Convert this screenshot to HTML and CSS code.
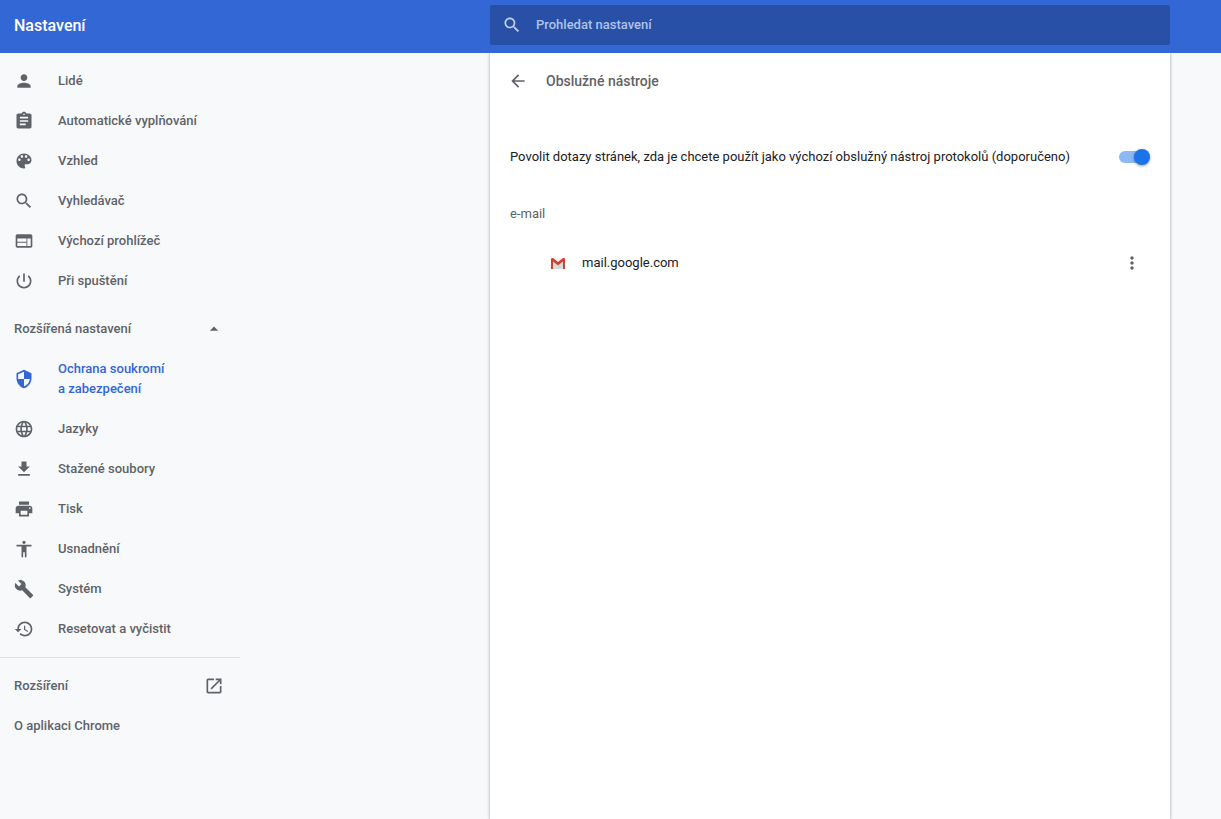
FILE: index.html
```html
<!DOCTYPE html>
<html lang="cs">
<head>
<meta charset="utf-8">
<meta name="viewport" content="width=device-width, initial-scale=1">
<title>Nastavení</title>
<link rel="stylesheet" href="styles.css">
</head>
<body>
<header class="toolbar columns">
  <h1 class="toolbar-title">Nastavení</h1>
  <label class="search">
    <svg class="icon" viewBox="0 0 24 24" aria-hidden="true"><path d="M15.5 14h-.79l-.28-.27C15.41 12.59 16 11.11 16 9.5 16 5.91 13.09 3 9.5 3S3 5.91 3 9.5 5.91 16 9.5 16c1.61 0 3.09-.59 4.23-1.57l.27.28v.79l5 4.99L20.49 19l-4.99-5zm-6 0C7.01 14 5 11.99 5 9.5S7.01 5 9.5 5 14 7.01 14 9.5 11.99 14 9.5 14z"/></svg>
    <input class="search-input" type="search" placeholder="Prohledat nastavení" aria-label="Prohledat nastavení">
  </label>
</header>
<div class="content columns">
  <nav class="menu">
    <a class="menu-item" href="#people"><svg class="icon" viewBox="0 0 24 24"><path d="M12 12c2.21 0 4-1.79 4-4s-1.79-4-4-4-4 1.790-4 4 1.790 4 4 4zm0 2c-2.670 0-8 1.340-8 4v2h16v-2c0-2.660-5.330-4-8-4z"/></svg><span>Lidé</span></a>
    <a class="menu-item" href="#autofill"><svg class="icon" viewBox="0 0 24 24"><path d="M19 3h-4.180C14.400 1.840 13.300 1 12 1s-2.400.84-2.820 2H5c-1.100 0-2 .9-2 2v14c0 1.100.9 2 2 2h14c1.100 0 2-.9 2-2V5c0-1.100-.9-2-2-2zm-7 0c.55 0 1 .45 1 1s-.45 1-1 1-1-.45-1-1 .45-1 1-1zm2 14H7v-2h7v2zm3-4H7v-2h10v2zm0-4H7V7h10v2z"/></svg><span>Automatické vyplňování</span></a>
    <a class="menu-item" href="#appearance"><svg class="icon" viewBox="0 0 24 24"><path d="M12 3c-4.970 0-9 4.030-9 9s4.030 9 9 9c.83 0 1.500-.67 1.500-1.500 0-.39-.15-.74-.39-1.010-.23-.26-.38-.61-.38-.99 0-.83.67-1.500 1.500-1.500H16c2.760 0 5-2.240 5-5 0-4.420-4.030-8-9-8zm-5.500 9c-.83 0-1.500-.67-1.500-1.500S5.670 9 6.500 9 8 9.670 8 10.500 7.330 12 6.500 12zm3-4C8.670 8 8 7.330 8 6.500S8.670 5 9.500 5s1.500.67 1.500 1.500S10.330 8 9.500 8zm5 0c-.83 0-1.500-.67-1.500-1.500S13.670 5 14.500 5s1.500.67 1.500 1.500S15.330 8 14.500 8zm3 4c-.83 0-1.500-.67-1.500-1.500S16.670 9 17.500 9s1.500.67 1.500 1.500-.67 1.500-1.500 1.500z"/></svg><span>Vzhled</span></a>
    <a class="menu-item" href="#search"><svg class="icon" viewBox="0 0 24 24"><path d="M15.5 14h-.79l-.28-.27C15.41 12.59 16 11.11 16 9.5 16 5.91 13.09 3 9.5 3S3 5.910 3 9.500 5.910 16 9.500 16c1.610 0 3.090-.59 4.230-1.570l.27.28v.79l5 4.990L20.490 19l-4.990-5zm-6 0C7.010 14 5 11.990 5 9.500S7.010 5 9.500 5 14 7.010 14 9.500 11.990 14 9.500 14z"/></svg><span>Vyhledávač</span></a>
    <a class="menu-item" href="#default-browser"><svg class="icon" viewBox="0 0 24 24"><path d="M20 4H4c-1.100 0-1.990.9-1.990 2L2 18c0 1.100.9 2 2 2h16c1.100 0 2-.9 2-2V6c0-1.100-.9-2-2-2zm-5 14H4v-4h11v4zm0-5H4V9h11v4zm5 5h-4V9h4v9z"/></svg><span>Výchozí prohlížeč</span></a>
    <a class="menu-item" href="#on-startup"><svg class="icon" viewBox="0 0 24 24"><path d="M13 3h-2v10h2V3zm4.830 2.170l-1.420 1.420C17.990 7.860 19 9.810 19 12c0 3.870-3.130 7-7 7s-7-3.130-7-7c0-2.190 1.010-4.140 2.580-5.420L6.170 5.170C4.230 6.820 3 9.260 3 12c0 4.970 4.030 9 9 9s9-4.030 9-9c0-2.740-1.230-5.180-3.170-6.830z"/></svg><span>Při spuštění</span></a>

    <button class="menu-item menu-toggle" type="button" aria-expanded="true"><span>Rozšířená nastavení</span><svg class="icon" viewBox="0 0 24 24"><path d="M7 14l5-5 5 5z"/></svg></button>

    <a class="menu-item selected" href="#privacy" aria-current="page"><svg class="icon" viewBox="0 0 24 24"><path d="M12 1L3 5v6c0 5.550 3.840 10.740 9 12 5.160-1.260 9-6.450 9-12V5l-9-4zm0 10.990h7c-.53 4.120-3.280 7.790-7 8.940V12H5V6.300l7-3.110v8.800z"/></svg><span>Ochrana soukromí<br>a zabezpečení</span></a>
    <a class="menu-item" href="#languages"><svg class="icon" viewBox="0 0 24 24"><path d="M11.990 2C6.470 2 2 6.480 2 12s4.470 10 9.990 10C17.520 22 22 17.520 22 12S17.520 2 11.990 2zm6.930 6h-2.950c-.32-1.250-.78-2.450-1.380-3.560 1.840.63 3.370 1.910 4.330 3.560zM12 4.040c.83 1.200 1.480 2.530 1.910 3.960h-3.820c.43-1.430 1.080-2.760 1.910-3.960zM4.260 14C4.100 13.360 4 12.690 4 12s.1-1.360.26-2h3.380c-.08.66-.14 1.320-.14 2s.06 1.340.14 2H4.260zm.82 2h2.950c.32 1.250.78 2.450 1.380 3.560-1.840-.63-3.370-1.900-4.330-3.560zm2.950-8H5.080c.96-1.660 2.490-2.930 4.330-3.560C8.810 5.550 8.350 6.750 8.030 8zM12 19.960c-.83-1.200-1.480-2.530-1.910-3.960h3.820c-.43 1.430-1.080 2.760-1.910 3.960zM14.340 14H9.660c-.09-.66-.16-1.320-.16-2s.07-1.350.16-2h4.680c.09.65.16 1.320.16 2s-.07 1.340-.16 2zm.25 5.560c.6-1.110 1.060-2.310 1.380-3.560h2.950c-.96 1.650-2.490 2.930-4.330 3.560zM16.360 14c.08-.66.14-1.320.14-2s-.06-1.340-.14-2h3.380c.16.64.26 1.310.26 2s-.1 1.360-.26 2h-3.380z"/></svg><span>Jazyky</span></a>
    <a class="menu-item" href="#downloads"><svg class="icon" viewBox="0 0 24 24"><path d="M19 9h-4V3H9v6H5l7 7 7-7zM5 18v2h14v-2H5z"/></svg><span>Stažené soubory</span></a>
    <a class="menu-item" href="#printing"><svg class="icon" viewBox="0 0 24 24"><path d="M19 8H5c-1.660 0-3 1.340-3 3v6h4v4h12v-4h4v-6c0-1.660-1.340-3-3-3zm-3 11H8v-5h8v5zm3-7c-.55 0-1-.45-1-1s.45-1 1-1 1 .45 1 1-.45 1-1 1zm-1-9H6v4h12V3z"/></svg><span>Tisk</span></a>
    <a class="menu-item" href="#accessibility"><svg class="icon" viewBox="0 0 24 24"><path d="M12 2c1.100 0 2 .9 2 2s-.9 2-2 2-2-.9-2-2 .9-2 2-2zm9 7h-6v13h-2v-6h-2v6H9V9H3V7h18v2z"/></svg><span>Usnadnění</span></a>
    <a class="menu-item" href="#system"><svg class="icon" viewBox="0 0 24 24"><path d="M22.700 19l-9.100-9.100c.9-2.300.4-5-1.500-6.900-2-2-5-2.400-7.400-1.300L9 6 6 9 1.600 4.700C.4 7.100.9 10.100 2.900 12.100c1.900 1.900 4.600 2.400 6.900 1.500l9.100 9.100c.4.4 1 .4 1.400 0l2.300-2.300c.5-.4.5-1.100.1-1.400z"/></svg><span>Systém</span></a>
    <a class="menu-item" href="#reset"><svg class="icon" viewBox="0 0 24 24"><path d="M13 3c-4.970 0-9 4.030-9 9H1l3.890 3.890.07.14L9 12H6c0-3.870 3.130-7 7-7s7 3.130 7 7-3.130 7-7 7c-1.930 0-3.680-.79-4.940-2.060l-1.420 1.420C8.270 19.990 10.510 21 13 21c4.970 0 9-4.030 9-9s-4.030-9-9-9zm-1 5v5l4.280 2.540.72-1.210-3.500-2.080V8H12z"/></svg><span>Resetovat a vyčistit</span></a>

    <hr class="menu-divider">

    <a class="menu-item menu-link" href="#extensions"><span>Rozšíření</span><svg class="icon" viewBox="0 0 24 24"><path d="M19 19H5V5h7V3H5c-1.110 0-2 .9-2 2v14c0 1.100.89 2 2 2h14c1.100 0 2-.9 2-2v-7h-2v7zM14 3v2h3.590l-9.830 9.830 1.410 1.410L19 6.410V10h2V3h-7z"/></svg></a>
    <a class="menu-item menu-link" href="#about"><span>O aplikaci Chrome</span></a>
  </nav>

  <main class="page">
    <div class="page-header">
      <button class="icon-button" type="button" aria-label="Zpět"><svg class="icon" viewBox="0 0 24 24"><path d="M20 11H7.830l5.590-5.590L12 4l-8 8 8 8 1.410-1.410L7.830 13H20v-2z"/></svg></button>
      <h2 class="page-title">Obslužné nástroje</h2>
    </div>
    <div class="setting-row">
      <label for="handlers">Povolit dotazy stránek, zda je chcete použít jako výchozí obslužný nástroj protokolů (doporučeno)</label>
      <input class="switch" id="handlers" type="checkbox" role="switch" checked>
    </div>
    <h3 class="protocol">e-mail</h3>
    <div class="handler-row">
      <svg class="favicon" viewBox="0 0 16 16" aria-hidden="true"><path fill="#e3e3e3" d="M2 3h12v11H2z"/><path fill="#cfcfcf" d="M3 7l5 4 5-4v7H3z" opacity=".5"/><path fill="#f3f3f3" d="M3 3h10L8 7z"/><path fill="#c9453a" d="M1 4q0-1 1-1h1l5 4 5-4h1q1 0 1 1v10h-2V6.500L8 10.500 3 6.500V14H1z"/></svg>
      <span class="handler-host">mail.google.com</span>
      <button class="icon-button" type="button" aria-label="Další akce"><svg class="icon" viewBox="0 0 24 24"><path d="M12 8c1.100 0 2-.9 2-2s-.9-2-2-2-2 .9-2 2 .9 2 2 2zm0 2c-1.100 0-2 .9-2 2s.9 2 2 2 2-.9 2-2-.9-2-2-2zm0 6c-1.100 0-2 .9-2 2s.9 2 2 2 2-.9 2-2-.9-2-2-2z"/></svg></button>
    </div>
  </main>
</div>
</body>
</html>
```
FILE: styles.css
```css
* {
  box-sizing: border-box;
}

body {
  display: flex;
  flex-direction: column;
  min-height: 100vh;
  margin: 0;
  background: #f8f9fa;
  color: #202124;
  font: 400 13px/20px Roboto, "Liberation Sans", sans-serif;
}

h1, h2, h3 {
  margin: 0;
}

.columns {
  display: grid;
  grid-template-columns: minmax(240px, 1fr) minmax(0, 680px) 51px;
}

.icon {
  display: block;
  flex: none;
  width: 20px;
  height: 20px;
  fill: currentColor;
}

/* Toolbar */

.toolbar {
  padding: 5px 0 8px;
  background: #3367d6;
  color: #fff;
}

.toolbar-title {
  align-self: center;
  padding: 2px 0 0 14px;
  font-size: 16px;
  font-weight: 500;
}

.search {
  display: flex;
  align-items: center;
  gap: 14px;
  height: 40px;
  padding: 0 12px;
  border-radius: 2px;
  background: #2850a7;
  color: #c2d1f2;
}

.search-input {
  flex: 1;
  min-width: 0;
  padding: 0;
  border: 0;
  outline: 0;
  background: none;
  color: #fff;
  font: inherit;
  font-weight: 500;
}

.search-input::placeholder {
  color: #b0c2ea;
  opacity: 1;
}

/* Side menu */

.content {
  flex: 1;
}

.menu {
  width: 240px;
  padding-top: 8px;
}

.menu-item {
  display: flex;
  align-items: center;
  gap: 24px;
  width: 100%;
  padding: 10px 16px 10px 14px;
  color: #5f6368;
  font-weight: 500;
  text-decoration: none;
}

.menu-item.selected {
  color: #3367d6;
}

.menu-toggle {
  justify-content: space-between;
  margin-top: 8px;
  border: 0;
  background: none;
  font: inherit;
  font-weight: 500;
}

.menu-link {
  justify-content: space-between;
}

.menu-divider {
  margin: 8px 0;
  border: 0;
  border-top: 1px solid #dfe1e5;
}

/* Page */

.page {
  background: #fff;
  box-shadow: 0 0 3px rgba(60, 64, 67, 0.5);
  clip-path: inset(0 -4px);
}

.icon-button {
  display: grid;
  place-items: center;
  flex: none;
  width: 36px;
  height: 36px;
  padding: 0;
  border: 0;
  border-radius: 50%;
  background: none;
  color: #5f6368;
}

.page-header {
  display: flex;
  align-items: center;
  gap: 10px;
  padding: 10px;
}

.page-title {
  color: #5f6368;
  font-size: 14px;
  font-weight: 500;
}

.setting-row {
  display: flex;
  align-items: center;
  justify-content: space-between;
  gap: 20px;
  min-height: 48px;
  margin-top: 24px;
  padding: 0 20px;
}

.switch {
  display: flex;
  align-items: center;
  flex: none;
  appearance: none;
  width: 28px;
  height: 12px;
  margin: 0 3px 0 0;
  border-radius: 6px;
  background: #bdc1c6;
}

.switch::before {
  content: "";
  flex: none;
  width: 16px;
  height: 16px;
  border-radius: 50%;
  background: #fff;
  box-shadow: 0 1px 3px rgba(0, 0, 0, 0.4);
}

.switch:checked {
  background: #8cb8f6;
}

.switch:checked::before {
  margin-left: 15px;
  background: #1a73e8;
}

.protocol {
  padding: 23px 20px 15px;
  color: #5f6368;
  font-size: 13px;
  font-weight: 400;
}

.handler-row {
  display: flex;
  align-items: center;
  min-height: 48px;
  padding: 0 20px 0 60px;
}

.favicon {
  flex: none;
  width: 16px;
  height: 16px;
}

.handler-host {
  flex: 1;
  padding-left: 16px;
}
```
